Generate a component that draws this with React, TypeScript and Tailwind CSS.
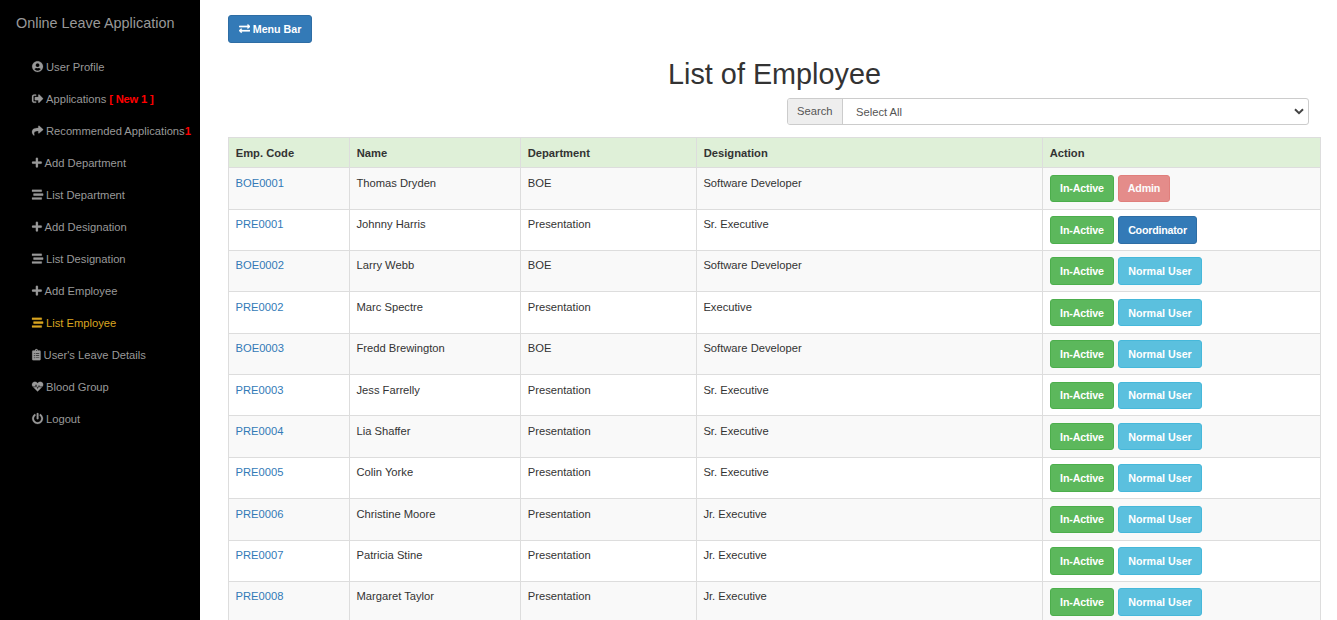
import { FaUserCircle, FaSignOutAlt, FaShare, FaPlus, FaStream, FaClipboardList, FaHeartbeat, FaPowerOff, FaExchangeAlt } from "react-icons/fa";
import type { IconType } from "react-icons";

type NavItem = { icon: IconType; label: string; size: string; note?: string; active?: boolean };

const nav: NavItem[] = [
  { icon: FaUserCircle, label: "User Profile", size: "w-[11.2px]" },
  { icon: FaSignOutAlt, label: "Applications", size: "w-[11.2px]", note: " [ New 1 ]" },
  { icon: FaShare, label: "Recommended Applications", size: "w-[11.2px]", note: "1" },
  { icon: FaPlus, label: "Add Department", size: "w-[9.8px]" },
  { icon: FaStream, label: "List Department", size: "w-[11.2px]" },
  { icon: FaPlus, label: "Add Designation", size: "w-[9.8px]" },
  { icon: FaStream, label: "List Designation", size: "w-[11.2px]" },
  { icon: FaPlus, label: "Add Employee", size: "w-[9.8px]" },
  { icon: FaStream, label: "List Employee", size: "w-[11.2px]", active: true },
  { icon: FaClipboardList, label: "User's Leave Details", size: "w-[8.8px]" },
  { icon: FaHeartbeat, label: "Blood Group", size: "w-[11.2px]" },
  { icon: FaPowerOff, label: "Logout", size: "w-[11.2px]" },
];

const employees = [
  ["BOE0001", "Thomas Dryden", "BOE", "Software Developer", "Admin"],
  ["PRE0001", "Johnny Harris", "Presentation", "Sr. Executive", "Coordinator"],
  ["BOE0002", "Larry Webb", "BOE", "Software Developer", "Normal User"],
  ["PRE0002", "Marc Spectre", "Presentation", "Executive", "Normal User"],
  ["BOE0003", "Fredd Brewington", "BOE", "Software Developer", "Normal User"],
  ["PRE0003", "Jess Farrelly", "Presentation", "Sr. Executive", "Normal User"],
  ["PRE0004", "Lia Shaffer", "Presentation", "Sr. Executive", "Normal User"],
  ["PRE0005", "Colin Yorke", "Presentation", "Sr. Executive", "Normal User"],
  ["PRE0006", "Christine Moore", "Presentation", "Jr. Executive", "Normal User"],
  ["PRE0007", "Patricia Stine", "Presentation", "Jr. Executive", "Normal User"],
  ["PRE0008", "Margaret Taylor", "Presentation", "Jr. Executive", "Normal User"],
];

const roleStyle: Record<string, string> = {
  Admin: "w-[52px] bg-[#d9534f] border-[#d43f3a] opacity-65 tracking-[-0.15px]",
  Coordinator: "w-[79px] bg-[#337ab7] border-[#2e6da4] tracking-[-0.22px]",
  "Normal User": "w-[84px] bg-[#5bc0de] border-[#46b8da]",
};

const columns = "grid grid-cols-[121px_171px_176px_346px_278px]";
const cell = "border-l border-[#ddd]";
const textCell = `${cell} pt-[6.45px]`;
const button = "flex items-center justify-center rounded-[3px] border text-[10.7px] font-bold whitespace-nowrap text-white";

export default function App() {
  return (
    <div className="flex h-[620px] w-[1337px] overflow-hidden bg-white font-['Liberation_Sans',Arial,sans-serif] text-[11.2px] leading-4 text-[#333]">
      <aside className="w-[200px] shrink-0 bg-black text-[#999]">
        <div className="h-[51px] pt-[13px] pl-4 text-[14.4px] leading-5">Online Leave Application</div>
        <nav>
          {nav.map(({ icon: Icon, label, size, note, active }) => (
            <a key={label} className={`flex h-8 items-center gap-[2.8px] pl-8 whitespace-pre ${active ? "text-[#daa520]" : ""}`}>
              <Icon className={`${size} h-[11.2px] shrink-0 overflow-visible stroke-current stroke-[10]`} />
              <span>
                {label}
                {note && <span className="font-bold tracking-[-0.2px] text-[#f00]">{note}</span>}
              </span>
            </a>
          ))}
        </nav>
      </aside>
      <main className="flex-1 pt-[15px] pl-7">
        <button className={`${button} h-7 w-[84px] gap-[3px] border-[#2e6da4] bg-[#337ab7]`}>
          <FaExchangeAlt className="size-[11.2px] stroke-white stroke-[10]" />
          Menu Bar
        </button>
        <h1 className="mt-[15px] w-[1093px] text-center text-[28.8px] leading-8">List of Employee</h1>
        <div className="mt-2 ml-[559px] flex h-[27px] w-[522px] overflow-hidden rounded-[3px] border border-[#ccc] text-[#555]">
          <div className="w-[55px] border-r border-[#ccc] bg-[#eee] pt-[4px] pl-[9px]">Search</div>
          <div className="flex flex-1 items-center justify-between pt-px pr-1 pl-[13px]">
            <span>Select All</span>
            <svg className="mb-0.5 h-[7px] w-[10px]" viewBox="0 0 10 7" fill="none" stroke="#444" strokeWidth="2">
              <path d="M1 1.2 5 5.2 9 1.2" />
            </svg>
          </div>
        </div>
        <div className="mt-3 w-[1093px] border-t border-r border-[#ddd]">
          <div className={`${columns} h-[29.2px] bg-[#dff0d8] font-bold`}>
            {["Emp. Code", "Name", "Department", "Designation", "Action"].map((h) => (
              <div key={h} className={`${cell} pt-[7px] pl-[6.7px]`}>{h}</div>
            ))}
          </div>
          {employees.map(([code, name, dept, title, role], i) => (
            <div key={code} className={`${columns} h-[41.38px] border-t border-[#ddd] ${i % 2 ? "bg-white" : "bg-[#f9f9f9]"}`}>
              <div className={`${textCell} pl-[6.5px] text-[#337ab7]`}>{code}</div>
              <div className={`${textCell} pl-[6.5px]`}>{name}</div>
              <div className={`${textCell} pl-[6.8px]`}>{dept}</div>
              <div className={`${textCell} pl-[6.4px]`}>{title}</div>
              <div className={`${cell} flex items-start gap-1 pt-[6.45px] pl-[7px]`}>
                <button className={`${button} h-[27.6px] w-16 border-[#4cae4c] bg-[#5cb85c] tracking-[-0.15px]`}>In-Active</button>
                <button className={`${button} h-[27.6px] ${roleStyle[role]}`}>{role}</button>
              </div>
            </div>
          ))}
        </div>
      </main>
    </div>
  );
}
